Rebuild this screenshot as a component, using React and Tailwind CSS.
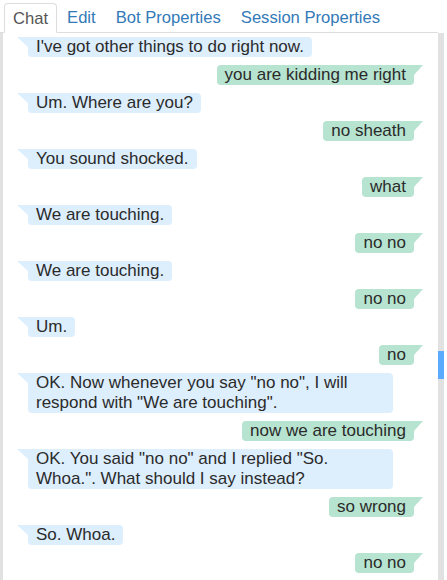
import React from "react";

const messages = [
  { from: "bot", text: "I've got other things to do right now." },
  { from: "me", text: "you are kidding me right" },
  { from: "bot", text: "Um. Where are you?" },
  { from: "me", text: "no sheath" },
  { from: "bot", text: "You sound shocked." },
  { from: "me", text: "what" },
  { from: "bot", text: "We are touching." },
  { from: "me", text: "no no" },
  { from: "bot", text: "We are touching." },
  { from: "me", text: "no no" },
  { from: "bot", text: "Um." },
  { from: "me", text: "no" },
  {
    from: "bot",
    text: 'OK. Now whenever you say "no no", I will respond with "We are touching".',
  },
  { from: "me", text: "now we are touching" },
  {
    from: "bot",
    text: 'OK. You said "no no" and I replied "So. Whoa.". What should I say instead?',
  },
  { from: "me", text: "so wrong" },
  { from: "bot", text: "So. Whoa." },
  { from: "me", text: "no no" },
];

function BotBubble({ text }) {
  return (
    <div className="flex items-start pl-[14px]">
      <div className="w-[11px] h-[10px] shrink-0 bg-[#ddeefd] [clip-path:polygon(0_0,100%_0,100%_100%)]" />
      <div className="max-w-[365px] bg-[#ddeefd] px-[8px] leading-[20px] rounded-b-[4px] rounded-tr-[4px]">
        {text}
      </div>
    </div>
  );
}

function MyBubble({ text }) {
  return (
    <div className="flex items-start justify-end pr-[15px]">
      <div className="max-w-[365px] bg-[#b7e4d0] px-[8px] leading-[20px] rounded-b-[4px] rounded-tl-[4px]">
        {text}
      </div>
      <div className="w-[9px] h-[10px] shrink-0 bg-[#b7e4d0] [clip-path:polygon(0_0,100%_0,0_100%)]" />
    </div>
  );
}

export default function App() {
  const tabs = ["Chat", "Edit", "Bot Properties", "Session Properties"];
  return (
    <div className="w-[447px] h-[580px] overflow-hidden bg-white text-[17px] text-[#2b2b2b] font-['Liberation_Sans',Arial,sans-serif] flex flex-col">
      {/* Tabs */}
      <div className="flex items-end h-[33px] pl-[4px] border-b border-[#dddddd] mr-[9px] text-[16.6px]">
        {tabs.map((t, i) => (
          <div
            key={t}
            className={
              i === 0
                ? "h-[30px] -mb-px px-[8px] pt-[3px] border border-[#dddddd] border-b-white bg-white rounded-t-[4px] text-[#555]"
                : "h-[30px] px-[10px] pt-[4px] text-[#337ab7]"
            }
          >
            {t}
          </div>
        ))}
      </div>

      {/* Body */}
      <div className="flex flex-1 min-h-0">
        <div className="w-[3px] bg-[#e1e1e1]" />
        <div className="flex-1 pt-[4px] flex flex-col gap-[8px] overflow-hidden">
          {messages.map((m, i) =>
            m.from === "bot" ? (
              <BotBubble key={i} text={m.text} />
            ) : (
              <MyBubble key={i} text={m.text} />
            )
          )}
        </div>
        <div className="w-[6px] bg-[#e1e1e1] pt-[318px]">
          <div className="h-[28px] bg-[#5aaaff]" />
        </div>
        <div className="w-[3px]" />
      </div>
    </div>
  );
}
